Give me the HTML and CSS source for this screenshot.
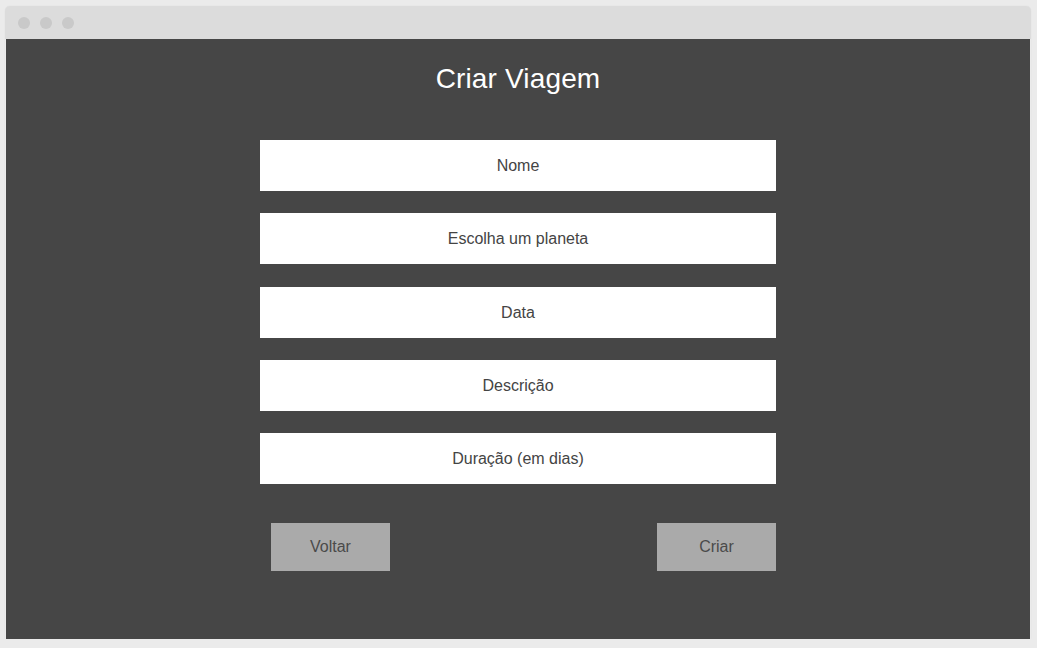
FILE: index.html
```html
<!DOCTYPE html>
<html lang="pt">
<head>
<meta charset="utf-8">
<title>Criar Viagem</title>
<link rel="stylesheet" href="styles.css">
</head>
<body>
<div class="window">
  <div class="titlebar">
    <span class="dot"></span><span class="dot"></span><span class="dot"></span>
  </div>
  <div class="content">
    <h1 class="title">Criar Viagem</h1>
    <form class="form">
      <div class="field">Nome</div>
      <div class="field">Escolha um planeta</div>
      <div class="field field-shift">Data</div>
      <div class="field">Descrição</div>
      <div class="field">Duração (em dias)</div>
      <div class="actions">
        <button type="button" class="btn">Voltar</button>
        <button type="button" class="btn">Criar</button>
      </div>
    </form>
  </div>
</div>
</body>
</html>
```

FILE: styles.css
```css
html, body {
  margin: 0;
  padding: 0;
  background: #ebebeb;
  font-family: "Liberation Sans", Arial, sans-serif;
}

.window {
  margin: 6px 0 0 5px;
  width: 1026px;
  height: 633px;
  display: flex;
  flex-direction: column;
  border-radius: 5px 5px 0 0;
  overflow: hidden;
  box-shadow: 0 0 1px rgba(0,0,0,0.12);
}

.titlebar {
  height: 33px;
  background: #dcdcdc;
  display: flex;
  align-items: center;
  gap: 10px;
  padding-left: 13px;
  box-sizing: border-box;
}

.dot {
  width: 12px;
  height: 12px;
  border-radius: 50%;
  background: #c9c9c9;
}

.content {
  flex: 1;
  background: #464646;
  margin: 0 1px;
  display: flex;
  flex-direction: column;
  align-items: center;
}

.title {
  margin: 24px 0 0;
  font-size: 28px;
  line-height: 32px;
  letter-spacing: 0.15px;
  font-weight: normal;
  color: #ffffff;
}

.form {
  margin-top: 45px;
  width: 516px;
  display: flex;
  flex-direction: column;
  gap: 22px;
}

.field {
  height: 51px;
  background: #ffffff;
  color: #444444;
  font-size: 16px;
  display: flex;
  align-items: center;
  justify-content: center;
}

.field-shift {
  margin-top: 1px;
}

.actions {
  margin-top: 17px;
  display: flex;
  justify-content: space-between;
  padding-left: 11px;
}

.btn {
  width: 119px;
  height: 48px;
  border: none;
  background: #aaaaaa;
  color: #4a4a4a;
  font-family: "Liberation Sans", Arial, sans-serif;
  font-size: 16px;
  padding: 0;
}
```
